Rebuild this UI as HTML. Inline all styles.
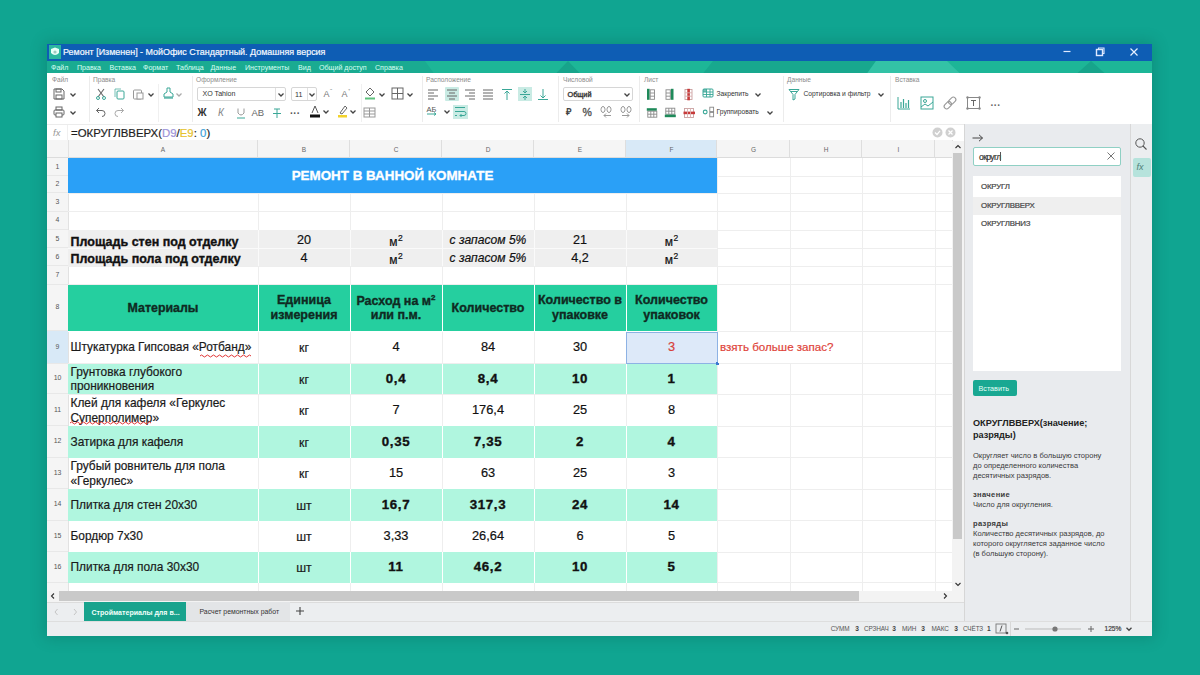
<!DOCTYPE html><html><head><meta charset="utf-8"><style>
*{box-sizing:border-box;margin:0;padding:0}
html,body{width:1200px;height:675px;overflow:hidden}
body{position:relative;background:#10a591;font-family:"Liberation Sans",sans-serif;color:#222}
div,span,svg{position:absolute}
.t{white-space:nowrap;line-height:1}
.k{-webkit-text-stroke:0.2px currentColor}
.kb{-webkit-text-stroke:0.35px currentColor}
</style></head><body>
<div style="left:47px;top:44px;width:1105px;height:592px;background:#fff;box-shadow:0 0 14px 2px rgba(0,60,50,0.22);"></div>
<div style="left:47px;top:44px;width:1105px;height:16.5px;background:#0e5db4;"></div>
<span class="t k" style="left:63px;top:48.4px;font-size:8.95px;color:#f4f8ff;font-weight:400;">Ремонт [Изменен] - МойОфис Стандартный. Домашняя версия</span>
<svg style="left:49px;top:45px" width="12" height="14" viewBox="0 0 12 14"><rect x="0" y="0" width="12" height="14" fill="#2bb7a0"/><path d="M2 4 L6 2.5 L10 4 L10 8 Q6 12 2 8 Z" fill="#e8fff8"/><circle cx="6" cy="7" r="1.6" fill="#9fc9c0"/></svg>
<svg style="left:1060px;top:44px" width="90" height="16"><line x1="3.5" y1="7.5" x2="10.5" y2="7.5" stroke="#dfeaff" stroke-width="1.2"/><rect x="36.5" y="5.5" width="6" height="6" fill="none" stroke="#dfeaff" stroke-width="1.4"/><path d="M38.5 5 V4 H44 V9.5 H43" fill="none" stroke="#dfeaff" stroke-width="1.1"/><path d="M70.5 4.5 L77.5 11.5 M77.5 4.5 L70.5 11.5" stroke="#e6f0ff" stroke-width="1.2"/></svg>
<div style="left:47px;top:60.5px;width:1105px;height:12.5px;background:#1db697;"></div>
<svg style="left:47px;top:60.5px" width="1105" height="12.5" viewBox="0 0 1105 13" preserveAspectRatio="none"><polygon points="0,0 378,0 387,13 0,13" fill="#1aab91"/><polygon points="509,13 521,0 533,13" fill="#17a48b"/><polygon points="656,13 666,0 829,0 820,13" fill="#18a88e"/><polygon points="820,13 829,0 900,0 913,13" fill="#33c2a6"/><polygon points="1030,13 1044,0 1058,13" fill="#17a48b"/></svg>
<span class="t " style="left:51px;top:65.2px;font-size:7.1px;color:#d9fff3;font-weight:400;">Файл</span>
<span class="t " style="left:77px;top:65.2px;font-size:7.1px;color:#d9fff3;font-weight:400;">Правка</span>
<span class="t " style="left:109.5px;top:65.2px;font-size:7.1px;color:#d9fff3;font-weight:400;">Вставка</span>
<span class="t " style="left:143px;top:65.2px;font-size:7.1px;color:#d9fff3;font-weight:400;">Формат</span>
<span class="t " style="left:176px;top:65.2px;font-size:7.1px;color:#d9fff3;font-weight:400;">Таблица</span>
<span class="t " style="left:210.5px;top:65.2px;font-size:7.1px;color:#d9fff3;font-weight:400;">Данные</span>
<span class="t " style="left:245px;top:65.2px;font-size:7.1px;color:#d9fff3;font-weight:400;">Инструменты</span>
<span class="t " style="left:298px;top:65.2px;font-size:7.1px;color:#d9fff3;font-weight:400;">Вид</span>
<span class="t " style="left:319px;top:65.2px;font-size:7.1px;color:#d9fff3;font-weight:400;">Общий доступ</span>
<span class="t " style="left:375px;top:65.2px;font-size:7.1px;color:#d9fff3;font-weight:400;">Справка</span>
<div style="left:47px;top:73px;width:1105px;height:51px;background:#fff;"></div>
<div style="left:47px;top:124px;width:1105px;height:1px;background:#ececec;"></div>
<span class="t " style="left:52px;top:76.5px;font-size:6.6px;color:#8c8c8c;font-weight:400;">Файл</span>
<span class="t " style="left:93px;top:76.5px;font-size:6.6px;color:#8c8c8c;font-weight:400;">Правка</span>
<span class="t " style="left:196px;top:76.5px;font-size:6.6px;color:#8c8c8c;font-weight:400;">Оформление</span>
<span class="t " style="left:426px;top:76.5px;font-size:6.6px;color:#8c8c8c;font-weight:400;">Расположение</span>
<span class="t " style="left:563px;top:76.5px;font-size:6.6px;color:#8c8c8c;font-weight:400;">Числовой</span>
<span class="t " style="left:644px;top:76.5px;font-size:6.6px;color:#8c8c8c;font-weight:400;">Лист</span>
<span class="t " style="left:787px;top:76.5px;font-size:6.6px;color:#8c8c8c;font-weight:400;">Данные</span>
<span class="t " style="left:895px;top:76.5px;font-size:6.6px;color:#8c8c8c;font-weight:400;">Вставка</span>
<div style="left:89px;top:76px;width:1px;height:46px;background:#ececec;"></div>
<div style="left:191.5px;top:76px;width:1px;height:46px;background:#ececec;"></div>
<div style="left:421.5px;top:76px;width:1px;height:46px;background:#ececec;"></div>
<div style="left:558px;top:76px;width:1px;height:46px;background:#ececec;"></div>
<div style="left:639px;top:76px;width:1px;height:46px;background:#ececec;"></div>
<div style="left:782.5px;top:76px;width:1px;height:46px;background:#ececec;"></div>
<div style="left:890px;top:76px;width:1px;height:46px;background:#ececec;"></div>
<div style="left:158px;top:84px;width:1px;height:38px;background:#f0f0f0;"></div>
<div style="left:360.5px;top:84px;width:1px;height:38px;background:#f0f0f0;"></div>
<span class="t " style="left:53px;top:128px;font-size:9.5px;color:#999;font-weight:400;font-style:italic;">fx</span>
<div style="left:67px;top:125px;width:1px;height:14.5px;background:#f0f0f0;"></div>
<span class="t k" style="left:71px;top:128.3px;font-size:11.4px;color:#1e1e1e">=ОКРУГЛВВЕРХ(<span style="position:static;color:#9d93d8">D9</span>/<span style="position:static;color:#e6c22e">E9</span>: <span style="position:static;color:#3d9fd8">0</span>)</span>
<svg style="left:931px;top:126px" width="26" height="13"><circle cx="6.5" cy="6.5" r="5" fill="#d0d0d0"/><path d="M4 6.5 L6 8.5 L9 4.8" stroke="#fff" stroke-width="1.2" fill="none"/><circle cx="19.5" cy="6.5" r="5" fill="#d0d0d0"/><path d="M17.5 4.5 L21.5 8.5 M21.5 4.5 L17.5 8.5" stroke="#fff" stroke-width="1.2"/></svg>
<div style="left:47px;top:139.5px;width:905px;height:18.5px;background:#f5f5f5;"></div>
<div style="left:68px;top:139.5px;width:190px;height:18.5px;background:#f5f5f5;"></div>
<div style="left:257px;top:139.5px;width:1px;height:18.5px;background:#dedede;"></div>
<span class="t " style="left:13.0px;width:300px;text-align:center;top:146.5px;font-size:6.5px;color:#666;font-weight:400;">A</span>
<div style="left:258px;top:139.5px;width:92px;height:18.5px;background:#f5f5f5;"></div>
<div style="left:349px;top:139.5px;width:1px;height:18.5px;background:#dedede;"></div>
<span class="t " style="left:154.0px;width:300px;text-align:center;top:146.5px;font-size:6.5px;color:#666;font-weight:400;">B</span>
<div style="left:350px;top:139.5px;width:92px;height:18.5px;background:#f5f5f5;"></div>
<div style="left:441px;top:139.5px;width:1px;height:18.5px;background:#dedede;"></div>
<span class="t " style="left:246.0px;width:300px;text-align:center;top:146.5px;font-size:6.5px;color:#666;font-weight:400;">C</span>
<div style="left:442px;top:139.5px;width:92px;height:18.5px;background:#f5f5f5;"></div>
<div style="left:533px;top:139.5px;width:1px;height:18.5px;background:#dedede;"></div>
<span class="t " style="left:338.0px;width:300px;text-align:center;top:146.5px;font-size:6.5px;color:#666;font-weight:400;">D</span>
<div style="left:534px;top:139.5px;width:92px;height:18.5px;background:#f5f5f5;"></div>
<div style="left:625px;top:139.5px;width:1px;height:18.5px;background:#dedede;"></div>
<span class="t " style="left:430.0px;width:300px;text-align:center;top:146.5px;font-size:6.5px;color:#666;font-weight:400;">E</span>
<div style="left:626px;top:139.5px;width:91px;height:18.5px;background:#d8e9f7;"></div>
<div style="left:716px;top:139.5px;width:1px;height:18.5px;background:#dedede;"></div>
<span class="t " style="left:521.5px;width:300px;text-align:center;top:146.5px;font-size:6.5px;color:#666;font-weight:400;">F</span>
<div style="left:717px;top:139.5px;width:73px;height:18.5px;background:#f5f5f5;"></div>
<div style="left:789px;top:139.5px;width:1px;height:18.5px;background:#dedede;"></div>
<span class="t " style="left:603.5px;width:300px;text-align:center;top:146.5px;font-size:6.5px;color:#666;font-weight:400;">G</span>
<div style="left:790px;top:139.5px;width:72px;height:18.5px;background:#f5f5f5;"></div>
<div style="left:861px;top:139.5px;width:1px;height:18.5px;background:#dedede;"></div>
<span class="t " style="left:676.0px;width:300px;text-align:center;top:146.5px;font-size:6.5px;color:#666;font-weight:400;">H</span>
<div style="left:862px;top:139.5px;width:73px;height:18.5px;background:#f5f5f5;"></div>
<div style="left:934px;top:139.5px;width:1px;height:18.5px;background:#dedede;"></div>
<span class="t " style="left:748.5px;width:300px;text-align:center;top:146.5px;font-size:6.5px;color:#666;font-weight:400;">I</span>
<div style="left:935px;top:139.5px;width:17px;height:18.5px;background:#f5f5f5;"></div>
<div style="left:952px;top:139.5px;width:1px;height:18.5px;background:#dedede;"></div>
<span class="t " style="left:821.5px;width:300px;text-align:center;top:146.5px;font-size:6.5px;color:#666;font-weight:400;">J</span>
<div style="left:47px;top:157px;width:905px;height:1px;background:#dcdcdc;"></div>
<div style="left:47px;top:158px;width:21px;height:18px;background:#f5f5f5;"></div>
<div style="left:47px;top:175px;width:21px;height:1px;background:#e8e8e8;"></div>
<span class="t " style="left:-92.5px;width:300px;text-align:center;top:163.6px;font-size:6.9px;color:#555;font-weight:400;">1</span>
<div style="left:47px;top:176px;width:21px;height:17px;background:#f5f5f5;"></div>
<div style="left:47px;top:192px;width:21px;height:1px;background:#e8e8e8;"></div>
<span class="t " style="left:-92.5px;width:300px;text-align:center;top:181.1px;font-size:6.9px;color:#555;font-weight:400;">2</span>
<div style="left:47px;top:193px;width:21px;height:18.5px;background:#f5f5f5;"></div>
<div style="left:47px;top:210.5px;width:21px;height:1px;background:#e8e8e8;"></div>
<span class="t " style="left:-92.5px;width:300px;text-align:center;top:198.85px;font-size:6.9px;color:#555;font-weight:400;">3</span>
<div style="left:47px;top:211.5px;width:21px;height:18.5px;background:#f5f5f5;"></div>
<div style="left:47px;top:229px;width:21px;height:1px;background:#e8e8e8;"></div>
<span class="t " style="left:-92.5px;width:300px;text-align:center;top:217.35px;font-size:6.9px;color:#555;font-weight:400;">4</span>
<div style="left:47px;top:230px;width:21px;height:18px;background:#f5f5f5;"></div>
<div style="left:47px;top:247px;width:21px;height:1px;background:#e8e8e8;"></div>
<span class="t " style="left:-92.5px;width:300px;text-align:center;top:235.6px;font-size:6.9px;color:#555;font-weight:400;">5</span>
<div style="left:47px;top:248px;width:21px;height:18px;background:#f5f5f5;"></div>
<div style="left:47px;top:265px;width:21px;height:1px;background:#e8e8e8;"></div>
<span class="t " style="left:-92.5px;width:300px;text-align:center;top:253.6px;font-size:6.9px;color:#555;font-weight:400;">6</span>
<div style="left:47px;top:266px;width:21px;height:18.5px;background:#f5f5f5;"></div>
<div style="left:47px;top:283.5px;width:21px;height:1px;background:#e8e8e8;"></div>
<span class="t " style="left:-92.5px;width:300px;text-align:center;top:271.85px;font-size:6.9px;color:#555;font-weight:400;">7</span>
<div style="left:47px;top:284.5px;width:21px;height:46.5px;background:#f5f5f5;"></div>
<div style="left:47px;top:330px;width:21px;height:1px;background:#e8e8e8;"></div>
<span class="t " style="left:-92.5px;width:300px;text-align:center;top:304.35px;font-size:6.9px;color:#555;font-weight:400;">8</span>
<div style="left:47px;top:331px;width:21px;height:32.5px;background:#d8e9f7;"></div>
<div style="left:47px;top:362.5px;width:21px;height:1px;background:#e8e8e8;"></div>
<span class="t " style="left:-92.5px;width:300px;text-align:center;top:343.85px;font-size:6.9px;color:#555;font-weight:400;">9</span>
<div style="left:47px;top:363.5px;width:21px;height:30.5px;background:#f5f5f5;"></div>
<div style="left:47px;top:393px;width:21px;height:1px;background:#e8e8e8;"></div>
<span class="t " style="left:-92.5px;width:300px;text-align:center;top:375.35px;font-size:6.9px;color:#555;font-weight:400;">10</span>
<div style="left:47px;top:394px;width:21px;height:32px;background:#f5f5f5;"></div>
<div style="left:47px;top:425px;width:21px;height:1px;background:#e8e8e8;"></div>
<span class="t " style="left:-92.5px;width:300px;text-align:center;top:406.6px;font-size:6.9px;color:#555;font-weight:400;">11</span>
<div style="left:47px;top:426px;width:21px;height:31.5px;background:#f5f5f5;"></div>
<div style="left:47px;top:456.5px;width:21px;height:1px;background:#e8e8e8;"></div>
<span class="t " style="left:-92.5px;width:300px;text-align:center;top:438.35px;font-size:6.9px;color:#555;font-weight:400;">12</span>
<div style="left:47px;top:457.5px;width:21px;height:31.5px;background:#f5f5f5;"></div>
<div style="left:47px;top:488px;width:21px;height:1px;background:#e8e8e8;"></div>
<span class="t " style="left:-92.5px;width:300px;text-align:center;top:469.85px;font-size:6.9px;color:#555;font-weight:400;">13</span>
<div style="left:47px;top:489px;width:21px;height:31.5px;background:#f5f5f5;"></div>
<div style="left:47px;top:519.5px;width:21px;height:1px;background:#e8e8e8;"></div>
<span class="t " style="left:-92.5px;width:300px;text-align:center;top:501.35px;font-size:6.9px;color:#555;font-weight:400;">14</span>
<div style="left:47px;top:520.5px;width:21px;height:31.5px;background:#f5f5f5;"></div>
<div style="left:47px;top:551px;width:21px;height:1px;background:#e8e8e8;"></div>
<span class="t " style="left:-92.5px;width:300px;text-align:center;top:532.85px;font-size:6.9px;color:#555;font-weight:400;">15</span>
<div style="left:47px;top:552px;width:21px;height:30.5px;background:#f5f5f5;"></div>
<div style="left:47px;top:581.5px;width:21px;height:1px;background:#e8e8e8;"></div>
<span class="t " style="left:-92.5px;width:300px;text-align:center;top:563.85px;font-size:6.9px;color:#555;font-weight:400;">16</span>
<div style="left:47px;top:582.5px;width:21px;height:8.0px;background:#f5f5f5;"></div>
<span class="t " style="left:-92.5px;width:300px;text-align:center;top:594.85px;font-size:6.9px;color:#555;font-weight:400;">17</span>
<div style="left:67.5px;top:139.5px;width:1px;height:451.0px;background:#e2e2e2;"></div>
<div style="left:257.5px;top:158px;width:1px;height:432.5px;background:#eeeeee;"></div>
<div style="left:349.5px;top:158px;width:1px;height:432.5px;background:#eeeeee;"></div>
<div style="left:441.5px;top:158px;width:1px;height:432.5px;background:#eeeeee;"></div>
<div style="left:533.5px;top:158px;width:1px;height:432.5px;background:#eeeeee;"></div>
<div style="left:625.5px;top:158px;width:1px;height:432.5px;background:#eeeeee;"></div>
<div style="left:716.5px;top:158px;width:1px;height:432.5px;background:#eeeeee;"></div>
<div style="left:789.5px;top:158px;width:1px;height:432.5px;background:#eeeeee;"></div>
<div style="left:861.5px;top:158px;width:1px;height:432.5px;background:#eeeeee;"></div>
<div style="left:934.5px;top:158px;width:1px;height:432.5px;background:#eeeeee;"></div>
<div style="left:68px;top:175.5px;width:884px;height:1px;background:#eeeeee;"></div>
<div style="left:68px;top:192.5px;width:884px;height:1px;background:#eeeeee;"></div>
<div style="left:68px;top:211.0px;width:884px;height:1px;background:#eeeeee;"></div>
<div style="left:68px;top:229.5px;width:884px;height:1px;background:#eeeeee;"></div>
<div style="left:68px;top:247.5px;width:884px;height:1px;background:#eeeeee;"></div>
<div style="left:68px;top:265.5px;width:884px;height:1px;background:#eeeeee;"></div>
<div style="left:68px;top:284.0px;width:884px;height:1px;background:#eeeeee;"></div>
<div style="left:68px;top:330.5px;width:884px;height:1px;background:#eeeeee;"></div>
<div style="left:68px;top:363.0px;width:884px;height:1px;background:#eeeeee;"></div>
<div style="left:68px;top:393.5px;width:884px;height:1px;background:#eeeeee;"></div>
<div style="left:68px;top:425.5px;width:884px;height:1px;background:#eeeeee;"></div>
<div style="left:68px;top:457.0px;width:884px;height:1px;background:#eeeeee;"></div>
<div style="left:68px;top:488.5px;width:884px;height:1px;background:#eeeeee;"></div>
<div style="left:68px;top:520.0px;width:884px;height:1px;background:#eeeeee;"></div>
<div style="left:68px;top:551.5px;width:884px;height:1px;background:#eeeeee;"></div>
<div style="left:68px;top:582.0px;width:884px;height:1px;background:#eeeeee;"></div>
<div style="left:68px;top:158px;width:649px;height:35px;background:#2aa0f7;"></div>
<span class="t kb" style="left:242.5px;width:300px;text-align:center;top:169px;font-size:13.4px;color:#fff;font-weight:700;">РЕМОНТ В ВАННОЙ КОМНАТЕ</span>
<div style="left:68px;top:230px;width:649px;height:18px;background:#efefef;"></div>
<div style="left:257.5px;top:230px;width:1px;height:18px;background:#fafafa;"></div>
<div style="left:349.5px;top:230px;width:1px;height:18px;background:#fafafa;"></div>
<div style="left:441.5px;top:230px;width:1px;height:18px;background:#fafafa;"></div>
<div style="left:533.5px;top:230px;width:1px;height:18px;background:#fafafa;"></div>
<div style="left:625.5px;top:230px;width:1px;height:18px;background:#fafafa;"></div>
<div style="left:68px;top:248px;width:649px;height:18px;background:#efefef;"></div>
<div style="left:257.5px;top:248px;width:1px;height:18px;background:#fafafa;"></div>
<div style="left:349.5px;top:248px;width:1px;height:18px;background:#fafafa;"></div>
<div style="left:441.5px;top:248px;width:1px;height:18px;background:#fafafa;"></div>
<div style="left:533.5px;top:248px;width:1px;height:18px;background:#fafafa;"></div>
<div style="left:625.5px;top:248px;width:1px;height:18px;background:#fafafa;"></div>
<div style="left:68px;top:247.5px;width:649px;height:1px;background:#fafafa;"></div>
<div style="left:68px;top:284.5px;width:649px;height:46.5px;background:#25cf9f;"></div>
<div style="left:257.5px;top:284.5px;width:1px;height:46.5px;background:#fff;"></div>
<div style="left:349.5px;top:284.5px;width:1px;height:46.5px;background:#fff;"></div>
<div style="left:441.5px;top:284.5px;width:1px;height:46.5px;background:#fff;"></div>
<div style="left:533.5px;top:284.5px;width:1px;height:46.5px;background:#fff;"></div>
<div style="left:625.5px;top:284.5px;width:1px;height:46.5px;background:#fff;"></div>
<div style="left:68px;top:363.5px;width:649px;height:30.5px;background:#b0f6df;"></div>
<div style="left:257.5px;top:363.5px;width:1px;height:30.5px;background:#fff;"></div>
<div style="left:349.5px;top:363.5px;width:1px;height:30.5px;background:#fff;"></div>
<div style="left:441.5px;top:363.5px;width:1px;height:30.5px;background:#fff;"></div>
<div style="left:533.5px;top:363.5px;width:1px;height:30.5px;background:#fff;"></div>
<div style="left:625.5px;top:363.5px;width:1px;height:30.5px;background:#fff;"></div>
<div style="left:68px;top:426px;width:649px;height:31.5px;background:#b0f6df;"></div>
<div style="left:257.5px;top:426px;width:1px;height:31.5px;background:#fff;"></div>
<div style="left:349.5px;top:426px;width:1px;height:31.5px;background:#fff;"></div>
<div style="left:441.5px;top:426px;width:1px;height:31.5px;background:#fff;"></div>
<div style="left:533.5px;top:426px;width:1px;height:31.5px;background:#fff;"></div>
<div style="left:625.5px;top:426px;width:1px;height:31.5px;background:#fff;"></div>
<div style="left:68px;top:489px;width:649px;height:31.5px;background:#b0f6df;"></div>
<div style="left:257.5px;top:489px;width:1px;height:31.5px;background:#fff;"></div>
<div style="left:349.5px;top:489px;width:1px;height:31.5px;background:#fff;"></div>
<div style="left:441.5px;top:489px;width:1px;height:31.5px;background:#fff;"></div>
<div style="left:533.5px;top:489px;width:1px;height:31.5px;background:#fff;"></div>
<div style="left:625.5px;top:489px;width:1px;height:31.5px;background:#fff;"></div>
<div style="left:68px;top:552px;width:649px;height:30.5px;background:#b0f6df;"></div>
<div style="left:257.5px;top:552px;width:1px;height:30.5px;background:#fff;"></div>
<div style="left:349.5px;top:552px;width:1px;height:30.5px;background:#fff;"></div>
<div style="left:441.5px;top:552px;width:1px;height:30.5px;background:#fff;"></div>
<div style="left:533.5px;top:552px;width:1px;height:30.5px;background:#fff;"></div>
<div style="left:625.5px;top:552px;width:1px;height:30.5px;background:#fff;"></div>
<div style="left:68px;top:331px;width:649px;height:0.8px;background:#fff;"></div>
<div style="left:625.5px;top:331.5px;width:92px;height:32px;background:#dde9f9;border:1px solid #8db2e4;"></div>
<div style="left:715.5px;top:361.5px;width:3px;height:3px;background:#3a78d0;"></div>
<span class="t kb" style="left:70.5px;top:235.5px;font-size:12.5px;color:#111;font-weight:700;">Площадь стен под отделку</span>
<span class="t kb" style="left:70.5px;top:252.8px;font-size:12.5px;color:#111;font-weight:700;">Площадь пола под отделку</span>
<span class="t k" style="left:154.0px;width:300px;text-align:center;top:233.76999999999998px;font-size:12.6px;color:#111;font-weight:400;">20</span>
<span class="t k" style="left:246.0px;width:300px;text-align:center;top:234.1px;font-size:12px;color:#111;font-weight:400;">м<span style='position:static;font-size:8.5px;vertical-align:5px;margin-left:0.5px'>2</span></span>
<span class="t k" style="left:338.0px;width:300px;text-align:center;top:234.045px;font-size:12.1px;color:#111;font-weight:400;font-style:italic;">с запасом 5%</span>
<span class="t k" style="left:430.0px;width:300px;text-align:center;top:233.76999999999998px;font-size:12.6px;color:#111;font-weight:400;">21</span>
<span class="t k" style="left:521.5px;width:300px;text-align:center;top:234.1px;font-size:12px;color:#111;font-weight:400;">м<span style='position:static;font-size:8.5px;vertical-align:5px;margin-left:0.5px'>2</span></span>
<span class="t k" style="left:154.0px;width:300px;text-align:center;top:251.76999999999998px;font-size:12.6px;color:#111;font-weight:400;">4</span>
<span class="t k" style="left:246.0px;width:300px;text-align:center;top:252.1px;font-size:12px;color:#111;font-weight:400;">м<span style='position:static;font-size:8.5px;vertical-align:5px;margin-left:0.5px'>2</span></span>
<span class="t k" style="left:338.0px;width:300px;text-align:center;top:252.045px;font-size:12.1px;color:#111;font-weight:400;font-style:italic;">с запасом 5%</span>
<span class="t k" style="left:430.0px;width:300px;text-align:center;top:251.76999999999998px;font-size:12.6px;color:#111;font-weight:400;">4,2</span>
<span class="t k" style="left:521.5px;width:300px;text-align:center;top:252.1px;font-size:12px;color:#111;font-weight:400;">м<span style='position:static;font-size:8.5px;vertical-align:5px;margin-left:0.5px'>2</span></span>
<span class="t kb" style="left:13px;width:300px;text-align:center;top:301.55px;font-size:12.4px;color:#0f2a22;font-weight:700;">Материалы</span>
<span class="t kb" style="left:154px;width:300px;text-align:center;top:294.05px;font-size:12.5px;color:#0f2a22;font-weight:700;">Единица</span>
<span class="t kb" style="left:154px;width:300px;text-align:center;top:308.55px;font-size:12.5px;color:#0f2a22;font-weight:700;">измерения</span>
<span class="t kb" style="left:246px;width:300px;text-align:center;top:294.05px;font-size:12.5px;color:#0f2a22;font-weight:700;">Расход на м<sup style='position:static;font-size:8px;vertical-align:5px'>2</sup></span>
<span class="t kb" style="left:246px;width:300px;text-align:center;top:308.55px;font-size:12.5px;color:#0f2a22;font-weight:700;">или п.м.</span>
<span class="t kb" style="left:338px;width:300px;text-align:center;top:301.55px;font-size:12.5px;color:#0f2a22;font-weight:700;">Количество</span>
<span class="t kb" style="left:430px;width:300px;text-align:center;top:294.05px;font-size:12.5px;color:#0f2a22;font-weight:700;">Количество в</span>
<span class="t kb" style="left:430px;width:300px;text-align:center;top:308.55px;font-size:12.5px;color:#0f2a22;font-weight:700;">упаковке</span>
<span class="t kb" style="left:521.5px;width:300px;text-align:center;top:294.05px;font-size:12.5px;color:#0f2a22;font-weight:700;">Количество</span>
<span class="t kb" style="left:521.5px;width:300px;text-align:center;top:308.55px;font-size:12.5px;color:#0f2a22;font-weight:700;">упаковок</span>
<span class="t k" style="left:70.5px;top:342.35px;font-size:11.9px;color:#1a1a1a;font-weight:400;">Штукатурка Гипсовая «Ротбанд»</span>
<span class="t k" style="left:154.0px;width:300px;text-align:center;top:342.185px;font-size:12.3px;color:#1a1a1a;font-weight:400;">кг</span>
<span class="t k" style="left:246.0px;width:300px;text-align:center;top:340.90999999999997px;font-size:12.8px;color:#111;font-weight:400;">4</span>
<span class="t k" style="left:338.0px;width:300px;text-align:center;top:340.90999999999997px;font-size:12.8px;color:#111;font-weight:400;">84</span>
<span class="t k" style="left:430.0px;width:300px;text-align:center;top:340.90999999999997px;font-size:12.8px;color:#111;font-weight:400;">30</span>
<span class="t k" style="left:521.5px;width:300px;text-align:center;top:340.90999999999997px;font-size:12.8px;color:#d8413a;font-weight:400;">3</span>
<span class="t k" style="left:70.5px;top:366.85px;font-size:11.9px;color:#1a1a1a;font-weight:400;">Грунтовка глубокого</span>
<span class="t k" style="left:70.5px;top:381.25px;font-size:11.9px;color:#1a1a1a;font-weight:400;">проникновения</span>
<span class="t k" style="left:154.0px;width:300px;text-align:center;top:373.685px;font-size:12.3px;color:#1a1a1a;font-weight:400;">кг</span>
<span class="t kb" style="left:246.0px;width:300px;text-align:center;top:371.835px;font-size:13.3px;color:#111;font-weight:700;letter-spacing:0.6px;">0,4</span>
<span class="t kb" style="left:338.0px;width:300px;text-align:center;top:371.835px;font-size:13.3px;color:#111;font-weight:700;letter-spacing:0.6px;">8,4</span>
<span class="t kb" style="left:430.0px;width:300px;text-align:center;top:371.835px;font-size:13.3px;color:#111;font-weight:700;letter-spacing:0.6px;">10</span>
<span class="t kb" style="left:521.5px;width:300px;text-align:center;top:371.835px;font-size:13.3px;color:#111;font-weight:700;letter-spacing:0.6px;">1</span>
<span class="t k" style="left:70.5px;top:398.1px;font-size:11.9px;color:#1a1a1a;font-weight:400;">Клей для кафеля «Геркулес</span>
<span class="t k" style="left:70.5px;top:412.5px;font-size:11.9px;color:#1a1a1a;font-weight:400;">Суперполимер»</span>
<span class="t k" style="left:154.0px;width:300px;text-align:center;top:404.935px;font-size:12.3px;color:#1a1a1a;font-weight:400;">кг</span>
<span class="t k" style="left:246.0px;width:300px;text-align:center;top:403.65999999999997px;font-size:12.8px;color:#111;font-weight:400;">7</span>
<span class="t k" style="left:338.0px;width:300px;text-align:center;top:403.65999999999997px;font-size:12.8px;color:#111;font-weight:400;">176,4</span>
<span class="t k" style="left:430.0px;width:300px;text-align:center;top:403.65999999999997px;font-size:12.8px;color:#111;font-weight:400;">25</span>
<span class="t k" style="left:521.5px;width:300px;text-align:center;top:403.65999999999997px;font-size:12.8px;color:#111;font-weight:400;">8</span>
<span class="t k" style="left:70.5px;top:436.85px;font-size:11.9px;color:#1a1a1a;font-weight:400;">Затирка для кафеля</span>
<span class="t k" style="left:154.0px;width:300px;text-align:center;top:436.685px;font-size:12.3px;color:#1a1a1a;font-weight:400;">кг</span>
<span class="t kb" style="left:246.0px;width:300px;text-align:center;top:434.835px;font-size:13.3px;color:#111;font-weight:700;letter-spacing:0.6px;">0,35</span>
<span class="t kb" style="left:338.0px;width:300px;text-align:center;top:434.835px;font-size:13.3px;color:#111;font-weight:700;letter-spacing:0.6px;">7,35</span>
<span class="t kb" style="left:430.0px;width:300px;text-align:center;top:434.835px;font-size:13.3px;color:#111;font-weight:700;letter-spacing:0.6px;">2</span>
<span class="t kb" style="left:521.5px;width:300px;text-align:center;top:434.835px;font-size:13.3px;color:#111;font-weight:700;letter-spacing:0.6px;">4</span>
<span class="t k" style="left:70.5px;top:461.35px;font-size:11.9px;color:#1a1a1a;font-weight:400;">Грубый ровнитель для пола</span>
<span class="t k" style="left:70.5px;top:475.75px;font-size:11.9px;color:#1a1a1a;font-weight:400;">«Геркулес»</span>
<span class="t k" style="left:154.0px;width:300px;text-align:center;top:468.185px;font-size:12.3px;color:#1a1a1a;font-weight:400;">кг</span>
<span class="t k" style="left:246.0px;width:300px;text-align:center;top:466.90999999999997px;font-size:12.8px;color:#111;font-weight:400;">15</span>
<span class="t k" style="left:338.0px;width:300px;text-align:center;top:466.90999999999997px;font-size:12.8px;color:#111;font-weight:400;">63</span>
<span class="t k" style="left:430.0px;width:300px;text-align:center;top:466.90999999999997px;font-size:12.8px;color:#111;font-weight:400;">25</span>
<span class="t k" style="left:521.5px;width:300px;text-align:center;top:466.90999999999997px;font-size:12.8px;color:#111;font-weight:400;">3</span>
<span class="t k" style="left:70.5px;top:499.85px;font-size:11.9px;color:#1a1a1a;font-weight:400;">Плитка для стен 20х30</span>
<span class="t k" style="left:154.0px;width:300px;text-align:center;top:499.685px;font-size:12.3px;color:#1a1a1a;font-weight:400;">шт</span>
<span class="t kb" style="left:246.0px;width:300px;text-align:center;top:497.835px;font-size:13.3px;color:#111;font-weight:700;letter-spacing:0.6px;">16,7</span>
<span class="t kb" style="left:338.0px;width:300px;text-align:center;top:497.835px;font-size:13.3px;color:#111;font-weight:700;letter-spacing:0.6px;">317,3</span>
<span class="t kb" style="left:430.0px;width:300px;text-align:center;top:497.835px;font-size:13.3px;color:#111;font-weight:700;letter-spacing:0.6px;">24</span>
<span class="t kb" style="left:521.5px;width:300px;text-align:center;top:497.835px;font-size:13.3px;color:#111;font-weight:700;letter-spacing:0.6px;">14</span>
<span class="t k" style="left:70.5px;top:531.35px;font-size:11.9px;color:#1a1a1a;font-weight:400;">Бордюр 7х30</span>
<span class="t k" style="left:154.0px;width:300px;text-align:center;top:531.1850000000001px;font-size:12.3px;color:#1a1a1a;font-weight:400;">шт</span>
<span class="t k" style="left:246.0px;width:300px;text-align:center;top:529.9100000000001px;font-size:12.8px;color:#111;font-weight:400;">3,33</span>
<span class="t k" style="left:338.0px;width:300px;text-align:center;top:529.9100000000001px;font-size:12.8px;color:#111;font-weight:400;">26,64</span>
<span class="t k" style="left:430.0px;width:300px;text-align:center;top:529.9100000000001px;font-size:12.8px;color:#111;font-weight:400;">6</span>
<span class="t k" style="left:521.5px;width:300px;text-align:center;top:529.9100000000001px;font-size:12.8px;color:#111;font-weight:400;">5</span>
<span class="t k" style="left:70.5px;top:562.35px;font-size:11.9px;color:#1a1a1a;font-weight:400;">Плитка для пола 30х30</span>
<span class="t k" style="left:154.0px;width:300px;text-align:center;top:562.1850000000001px;font-size:12.3px;color:#1a1a1a;font-weight:400;">шт</span>
<span class="t kb" style="left:246.0px;width:300px;text-align:center;top:560.335px;font-size:13.3px;color:#111;font-weight:700;letter-spacing:0.6px;">11</span>
<span class="t kb" style="left:338.0px;width:300px;text-align:center;top:560.335px;font-size:13.3px;color:#111;font-weight:700;letter-spacing:0.6px;">46,2</span>
<span class="t kb" style="left:430.0px;width:300px;text-align:center;top:560.335px;font-size:13.3px;color:#111;font-weight:700;letter-spacing:0.6px;">10</span>
<span class="t kb" style="left:521.5px;width:300px;text-align:center;top:560.335px;font-size:13.3px;color:#111;font-weight:700;letter-spacing:0.6px;">5</span>
<div style="left:718px;top:331.5px;width:143.5px;height:31px;background:#fff;"></div>
<span class="t k" style="left:720px;top:341.05px;font-size:11.6px;color:#e0443a;font-weight:400;">взять больше запас?</span>
<svg style="left:200px;top:353.5px" width="52" height="4"><path d="M0 2 Q1.5 0 3 2 T6 2 T9 2 T12 2 T15 2 T18 2 T21 2 T24 2 T27 2 T30 2 T33 2 T36 2 T39 2 T42 2 T45 2 T48 2 T51 2" stroke="#e03535" stroke-width="1" fill="none"/></svg>
<svg style="left:70px;top:420.5px" width="84" height="4"><path d="M0 2 Q1.5 0 3 2 T6 2 T9 2 T12 2 T15 2 T18 2 T21 2 T24 2 T27 2 T30 2 T33 2 T36 2 T39 2 T42 2 T45 2 T48 2 T51 2 T54 2 T57 2 T60 2 T63 2 T66 2 T69 2 T72 2 T75 2 T78 2 T81 2" stroke="#e03535" stroke-width="1" fill="none"/></svg>
<div style="left:952px;top:141px;width:12px;height:450px;background:#f3f3f3;"></div>
<div style="left:953px;top:152.5px;width:9px;height:386px;background:#c9c9c9;"></div>
<svg style="left:953px;top:142px" width="10" height="10"><path d="M2.5 6 L5 3.5 L7.5 6" stroke="#333" stroke-width="1.1" fill="none"/></svg>
<svg style="left:953px;top:579px" width="10" height="10"><path d="M2.5 4 L5 6.5 L7.5 4" stroke="#333" stroke-width="1.1" fill="none"/></svg>
<div style="left:47px;top:590.5px;width:917px;height:11px;background:#f3f3f3;"></div>
<div style="left:59px;top:591px;width:800px;height:9.5px;background:#c9c9c9;"></div>
<svg style="left:48px;top:591px" width="10" height="10"><path d="M6 2.5 L3.5 5 L6 7.5" stroke="#333" stroke-width="1.1" fill="none"/></svg>
<svg style="left:940px;top:591px" width="10" height="10"><path d="M4 2.5 L6.5 5 L4 7.5" stroke="#333" stroke-width="1.1" fill="none"/></svg>
<div style="left:47px;top:601.5px;width:917px;height:20px;background:#eceef0;"></div>
<div style="left:47px;top:601.5px;width:917px;height:0.8px;background:#dcdcdc;"></div>
<svg style="left:50px;top:606px" width="30" height="12"><path d="M7.5 3 L5 6 L7.5 9" stroke="#c5c5c5" fill="none"/><path d="M24 3 L26.5 6 L24 9" stroke="#c5c5c5" fill="none"/></svg>
<div style="left:84px;top:602px;width:102px;height:18.5px;background:#18a38d;"></div>
<span class="t " style="left:91.5px;top:608.8px;font-size:7.05px;color:#f0fffa;font-weight:700;">Стройматериалы для в...</span>
<div style="left:186px;top:602px;width:103.5px;height:18.5px;background:#e3e5e7;"></div>
<span class="t " style="left:199.5px;top:608.8px;font-size:6.9px;color:#333;font-weight:400;">Расчет ремонтных работ</span>
<svg style="left:294px;top:605px" width="12" height="12"><path d="M6 2 V10 M2 6 H10" stroke="#444" stroke-width="1.1"/></svg>
<div style="left:964px;top:124px;width:188px;height:498px;background:#e9ebee;"></div>
<div style="left:963.5px;top:124px;width:1px;height:498px;background:#d6d6d6;"></div>
<div style="left:1129.5px;top:124px;width:1px;height:498px;background:#d8d8d8;"></div>
<div style="left:1130.5px;top:124px;width:21.5px;height:498px;background:#eceef0;"></div>
<svg style="left:971px;top:133px" width="14" height="10"><path d="M1.5 5 H11.5 M8 1.8 L11.5 5 L8 8.2" stroke="#444" stroke-width="1" fill="none"/></svg>
<div style="left:972.5px;top:147px;width:148px;height:18.5px;background:#fff;border:1px solid #8fd0c4;border-radius:2px;"></div>
<span class="t k" style="left:979px;top:152.8px;font-size:8.6px;color:#333;font-weight:400;letter-spacing:-0.65px">округл</span>
<div style="left:999.8px;top:152px;width:0.9px;height:8.8px;background:#555;"></div>
<svg style="left:1106px;top:151px" width="10" height="10"><path d="M1.5 1.5 L8.5 8.5 M8.5 1.5 L1.5 8.5" stroke="#777" stroke-width="1"/></svg>
<div style="left:972.5px;top:175.5px;width:148px;height:195px;background:#fff;"></div>
<div style="left:972.5px;top:196.5px;width:148px;height:18px;background:#efefef;"></div>
<span class="t k" style="left:981px;top:183.2px;font-size:7.9px;color:#444;font-weight:400;letter-spacing:-0.2px">ОКРУГЛ</span>
<span class="t k" style="left:981px;top:201.7px;font-size:7.9px;color:#444;font-weight:400;letter-spacing:-0.2px">ОКРУГЛВВЕРХ</span>
<span class="t k" style="left:981px;top:220.2px;font-size:7.9px;color:#444;font-weight:400;letter-spacing:-0.2px">ОКРУГЛВНИЗ</span>
<div style="left:973px;top:379.5px;width:43.5px;height:16px;background:#19a892;border-radius:2px;"></div>
<span class="t " style="left:978.5px;top:384.5px;font-size:7.2px;color:#e6fff8;font-weight:400;">Вставить</span>
<span class="t " style="left:973px;top:419px;font-size:9.15px;color:#222;font-weight:700;">ОКРУГЛВВЕРХ(значение;</span>
<span class="t " style="left:973px;top:430.7px;font-size:9.15px;color:#222;font-weight:700;">разряды)</span>
<span class="t " style="left:973px;top:451.5px;font-size:7.55px;color:#3a3a3a;font-weight:400;">Округляет число в большую сторону</span>
<span class="t " style="left:973px;top:461.5px;font-size:7.55px;color:#3a3a3a;font-weight:400;">до определенного количества</span>
<span class="t " style="left:973px;top:471.5px;font-size:7.55px;color:#3a3a3a;font-weight:400;">десятичных разрядов.</span>
<span class="t " style="left:973px;top:490.5px;font-size:7.55px;color:#3a3a3a;font-weight:700;letter-spacing:0.35px;">значение</span>
<span class="t " style="left:973px;top:500.5px;font-size:7.55px;color:#3a3a3a;font-weight:400;">Число для округления.</span>
<span class="t " style="left:973px;top:519.5px;font-size:7.55px;color:#3a3a3a;font-weight:700;letter-spacing:0.35px;">разряды</span>
<span class="t " style="left:973px;top:529.5px;font-size:7.55px;color:#3a3a3a;font-weight:400;">Количество десятичных разрядов, до</span>
<span class="t " style="left:973px;top:539.5px;font-size:7.55px;color:#3a3a3a;font-weight:400;">которого округляется заданное число</span>
<span class="t " style="left:973px;top:549.5px;font-size:7.55px;color:#3a3a3a;font-weight:400;">(в большую сторону).</span>
<svg style="left:1134px;top:137px" width="14" height="14"><circle cx="6" cy="6" r="4.2" stroke="#555" stroke-width="1" fill="none"/><path d="M9 9 L12.5 12.5" stroke="#555" stroke-width="1.1"/></svg>
<div style="left:1132.5px;top:158px;width:18px;height:18.5px;background:#b6e3dc;border-radius:2px;"></div>
<span class="t " style="left:1136.5px;top:163px;font-size:9px;color:#4f7f78;font-weight:400;font-style:italic;">fx</span>
<div style="left:47px;top:621px;width:1105px;height:15px;background:#eceef0;"></div>
<div style="left:47px;top:621px;width:1105px;height:0.8px;background:#dedede;"></div>
<span class="t " style="left:830.8px;top:626.2px;font-size:6.4px;color:#555;font-weight:400;width:19.0px;text-align:justify;text-align-last:justify;letter-spacing:-0.1px">СУММ</span>
<span class="t " style="left:855.2px;top:626.2px;font-size:6.6px;color:#444;font-weight:700;">3</span>
<span class="t " style="left:864px;top:626.2px;font-size:6.4px;color:#555;font-weight:400;width:24px;text-align:justify;text-align-last:justify;letter-spacing:-0.1px">СРЗНАЧ</span>
<span class="t " style="left:892.2px;top:626.2px;font-size:6.6px;color:#444;font-weight:700;">3</span>
<span class="t " style="left:902px;top:626.2px;font-size:6.4px;color:#555;font-weight:400;width:15px;text-align:justify;text-align-last:justify;letter-spacing:-0.1px">МИН</span>
<span class="t " style="left:921.2px;top:626.2px;font-size:6.6px;color:#444;font-weight:700;">3</span>
<span class="t " style="left:931.4px;top:626.2px;font-size:6.4px;color:#555;font-weight:400;width:17.600000000000023px;text-align:justify;text-align-last:justify;letter-spacing:-0.1px">МАКС</span>
<span class="t " style="left:954.2px;top:626.2px;font-size:6.6px;color:#444;font-weight:700;">3</span>
<span class="t " style="left:963px;top:626.2px;font-size:6.4px;color:#555;font-weight:400;width:18.5px;text-align:justify;text-align-last:justify;letter-spacing:-0.1px">СЧЁТЗ</span>
<span class="t " style="left:987px;top:626.2px;font-size:6.6px;color:#444;font-weight:700;">1</span>
<svg style="left:995px;top:623px" width="16" height="12"><rect x="1" y="1" width="10" height="9" fill="none" stroke="#777" stroke-width="0.9"/><path d="M7 2.5 L5 8.5" stroke="#555" stroke-width="1"/><circle cx="12" cy="10" r="1.3" fill="#555"/></svg>
<div style="left:1010px;top:622px;width:1px;height:14px;background:#d8d8d8;"></div>
<svg style="left:1012px;top:622px" width="130" height="14"><path d="M2 7 H7" stroke="#666"/><line x1="13" y1="7" x2="69" y2="7" stroke="#bbb" stroke-width="1"/><circle cx="43" cy="7" r="2.6" fill="#777"/><path d="M76 7 H82 M79 4 V10" stroke="#666"/><path d="M114.5 5.8 L117 8.3 L119.5 5.8" stroke="#444" stroke-width="1.3" fill="none"/></svg>
<span class="t k" style="left:1104.5px;top:626px;font-size:6.6px;color:#444;font-weight:400;">125%</span>
<svg style="left:53px;top:88px" width="12" height="12" viewBox="0 0 12 12"><path d="M1 1 H9 L11 3 V11 H1 Z" stroke="#666" fill="none"/><rect x="3" y="1" width="5" height="3" stroke="#666" fill="none"/><rect x="3" y="7" width="6" height="4" stroke="#666" fill="none"/></svg>
<svg style="left:69px;top:91.5px" width="8" height="6" viewBox="0 0 8 6"><path d="M1.5 1.5 L4 4 L6.5 1.5" stroke="#444" stroke-width="1.3" fill="none"/></svg>
<svg style="left:53px;top:106px" width="12" height="12" viewBox="0 0 12 12"><rect x="3" y="1" width="6" height="3" stroke="#666" fill="none"/><rect x="1" y="4" width="10" height="5" rx="1" stroke="#666" fill="none"/><rect x="3" y="7" width="6" height="4" stroke="#666" fill="#fff"/></svg>
<svg style="left:69px;top:109.5px" width="8" height="6" viewBox="0 0 8 6"><path d="M1.5 1.5 L4 4 L6.5 1.5" stroke="#444" stroke-width="1.3" fill="none"/></svg>
<svg style="left:95px;top:88px" width="12" height="12" viewBox="0 0 12 12"><path d="M3 1 L9 9 M9 1 L3 9" stroke="#666" stroke-width="1.1"/><circle cx="3" cy="10" r="1.5" stroke="#3aa797" fill="none"/><circle cx="9" cy="10" r="1.5" stroke="#3aa797" fill="none"/></svg>
<svg style="left:113px;top:88px" width="12" height="12" viewBox="0 0 12 12"><rect x="4" y="3" width="7" height="8" rx="1" stroke="#3aa797" fill="none"/><path d="M2 9 V1 H8" stroke="#3aa797" fill="none" opacity=".7"/></svg>
<svg style="left:132px;top:88px" width="12" height="12" viewBox="0 0 12 12"><rect x="1.5" y="2" width="8" height="9" rx="1" stroke="#999" fill="none"/><rect x="5" y="5" width="6" height="6" stroke="#999" fill="#fff"/></svg>
<svg style="left:147px;top:91.5px" width="8" height="6" viewBox="0 0 8 6"><path d="M1.5 1.5 L4 4 L6.5 1.5" stroke="#444" stroke-width="1.3" fill="none"/></svg>
<svg style="left:162px;top:87px" width="13" height="13" viewBox="0 0 13 13"><path d="M5 1 H8 V5 L11 7 V10 H2 V7 L5 5 Z" stroke="#3aa797" fill="none"/><rect x="2" y="10" width="9" height="2" fill="#3aa797" opacity=".6"/></svg>
<svg style="left:175px;top:91.5px" width="8" height="6" viewBox="0 0 8 6"><path d="M1.5 1.5 L4 4 L6.5 1.5" stroke="#aaa" stroke-width="1.3" fill="none"/></svg>
<svg style="left:95px;top:106px" width="12" height="12" viewBox="0 0 12 12"><path d="M4 2 L1.5 4.5 L4 7" stroke="#666" fill="none"/><path d="M1.5 4.5 H7 Q10 4.5 10 7.5 Q10 10.5 7 10.5" stroke="#666" fill="none"/></svg>
<svg style="left:113px;top:106px" width="12" height="12" viewBox="0 0 12 12"><path d="M8 2 L10.5 4.5 L8 7" stroke="#aaa" fill="none"/><path d="M10.5 4.5 H5 Q2 4.5 2 7.5 Q2 10.5 5 10.5" stroke="#aaa" fill="none"/></svg>
<div style="left:197px;top:87px;width:89px;height:14px;background:#fff;border:1px solid #d6d6d6;border-radius:2px;"></div>
<div style="left:275px;top:88px;width:1px;height:12px;background:#e0e0e0;"></div>
<span class="t " style="left:202.5px;top:90.5px;font-size:7.1px;color:#333;font-weight:400;">XO Tahion</span>
<svg style="left:276.5px;top:91.5px" width="8" height="6" viewBox="0 0 8 6"><path d="M1.5 1.5 L4 4 L6.5 1.5" stroke="#444" stroke-width="1.3" fill="none"/></svg>
<div style="left:290.5px;top:87px;width:26px;height:14px;background:#fff;border:1px solid #d6d6d6;border-radius:2px;"></div>
<div style="left:307px;top:88px;width:1px;height:12px;background:#e0e0e0;"></div>
<span class="t " style="left:295px;top:90.5px;font-size:7.2px;color:#333;font-weight:400;">11</span>
<svg style="left:308px;top:91.5px" width="8" height="6" viewBox="0 0 8 6"><path d="M1.5 1.5 L4 4 L6.5 1.5" stroke="#444" stroke-width="1.3" fill="none"/></svg>
<span class="t " style="left:323.5px;top:89.5px;font-size:9px;color:#777;font-weight:400;">A</span>
<span class="t " style="left:330px;top:88px;font-size:7px;color:#777;font-weight:400;">ˉ</span>
<span class="t " style="left:341.5px;top:89.5px;font-size:9px;color:#777;font-weight:400;">A</span>
<span class="t " style="left:348px;top:87.5px;font-size:7px;color:#777;font-weight:400;">⁺</span>
<svg style="left:364px;top:87px" width="13" height="13" viewBox="0 0 13 13"><path d="M6 1 L10 5 L6 9 L2 5 Z" stroke="#666" fill="none"/><rect x="1" y="10.5" width="10" height="2" fill="#5fc27e"/></svg>
<svg style="left:377.5px;top:91.5px" width="8" height="6" viewBox="0 0 8 6"><path d="M1.5 1.5 L4 4 L6.5 1.5" stroke="#444" stroke-width="1.3" fill="none"/></svg>
<svg style="left:391px;top:87px" width="13" height="13" viewBox="0 0 13 13"><rect x="1" y="1" width="11" height="11" stroke="#666" fill="none"/><path d="M6.5 1 V12 M1 6.5 H12" stroke="#666"/></svg>
<svg style="left:405.5px;top:91.5px" width="8" height="6" viewBox="0 0 8 6"><path d="M1.5 1.5 L4 4 L6.5 1.5" stroke="#444" stroke-width="1.3" fill="none"/></svg>
<span class="t " style="left:197.5px;top:108px;font-size:10px;color:#333;font-weight:700;">Ж</span>
<span class="t " style="left:218px;top:108px;font-size:10px;color:#888;font-weight:400;font-style:italic;">К</span>
<svg style="left:234.5px;top:106.5px" width="12" height="13" viewBox="0 0 12 13"><path d="M3 1.5 V6 Q6 10 9 6 V1.5" stroke="#999" fill="none"/><path d="M2 11 H10" stroke="#3aa797"/></svg>
<span class="t " style="left:251.5px;top:108px;font-size:9.5px;color:#666;font-weight:400;">AB</span>
<svg style="left:271px;top:106.5px" width="12" height="13" viewBox="0 0 12 13"><path d="M2 6.5 H10 M3 2 H9 M6 2 V11" stroke="#3aa797" fill="none"/></svg>
<span class="t " style="left:290px;top:108.5px;font-size:10px;color:#555;font-weight:700;">···</span>
<svg style="left:309px;top:104px" width="12" height="14" viewBox="0 0 12 14"><path d="M3 9 L6 2 L9 9" stroke="#555" fill="none"/><rect x="1" y="10.5" width="10" height="3" fill="#111"/></svg>
<svg style="left:322px;top:109px" width="8" height="6" viewBox="0 0 8 6"><path d="M1.5 1.5 L4 4 L6.5 1.5" stroke="#444" stroke-width="1.3" fill="none"/></svg>
<svg style="left:336px;top:104px" width="13" height="14" viewBox="0 0 13 14"><path d="M4 9 L9 2 L11 4 L6 10 Z" stroke="#666" fill="none"/><rect x="2" y="11" width="9" height="2.5" fill="#f2d22b"/></svg>
<svg style="left:349px;top:109px" width="8" height="6" viewBox="0 0 8 6"><path d="M1.5 1.5 L4 4 L6.5 1.5" stroke="#444" stroke-width="1.3" fill="none"/></svg>
<svg style="left:363px;top:107px" width="13" height="11" viewBox="0 0 13 11"><rect x="1" y="1" width="11" height="9" stroke="#999" fill="none"/><path d="M1 4 H12 M1 7 H12 M6.5 1 V10" stroke="#999"/></svg>
<svg style="left:427px;top:88px" width="12" height="13" viewBox="0 0 12 13"><path d="M1 2 H11 M1 5 H7 M1 8 H11 M1 11 H7" stroke="#666"/></svg>
<div style="left:444.5px;top:87px;width:14px;height:14px;background:#c9ebe4;border-radius:1px;"></div>
<svg style="left:445.5px;top:88px" width="12" height="13" viewBox="0 0 12 13"><path d="M1 2 H11 M3 5 H9 M1 8 H11 M3 11 H9" stroke="#666"/></svg>
<svg style="left:464px;top:88px" width="12" height="13" viewBox="0 0 12 13"><path d="M1 2 H11 M5 5 H11 M1 8 H11 M5 11 H11" stroke="#666"/></svg>
<svg style="left:482px;top:88px" width="12" height="13" viewBox="0 0 12 13"><path d="M1 2 H11 M1 5 H11 M1 8 H11 M1 11 H11" stroke="#666"/></svg>
<svg style="left:501px;top:88px" width="12" height="13" viewBox="0 0 12 13"><path d="M1 1.5 H11 M6 3 V12 M3.5 5.5 L6 3 L8.5 5.5" stroke="#3aa797" fill="none"/></svg>
<div style="left:518px;top:87px;width:14px;height:14px;background:#c9ebe4;"></div>
<svg style="left:519px;top:88px" width="12" height="13" viewBox="0 0 12 13"><path d="M1 6.5 H11 M6 1 V5 M6 8 V12 M4 3 L6 5 L8 3 M4 10 L6 8 L8 10" stroke="#3aa797" fill="none"/></svg>
<svg style="left:536.5px;top:88px" width="12" height="13" viewBox="0 0 12 13"><path d="M1 11.5 H11 M6 1 V10 M3.5 7.5 L6 10 L8.5 7.5" stroke="#3aa797" fill="none"/></svg>
<span class="t " style="left:426.5px;top:105.5px;font-size:7.5px;color:#555;font-weight:400;">AБ</span>
<svg style="left:426px;top:112px" width="12" height="4" viewBox="0 0 12 4"><path d="M1 2 H10 M8 0.5 L10 2 L8 3.5" stroke="#3aa797" fill="none"/></svg>
<svg style="left:442.5px;top:109px" width="8" height="6" viewBox="0 0 8 6"><path d="M1.5 1.5 L4 4 L6.5 1.5" stroke="#444" stroke-width="1.3" fill="none"/></svg>
<div style="left:453px;top:105px;width:15px;height:14px;background:#c9ebe4;"></div>
<svg style="left:454px;top:106px" width="13" height="12" viewBox="0 0 13 12"><path d="M1 1.5 H11 M1 5.5 H10 Q12 5.5 12 7.5 Q12 9.5 10 9.5 H6 M7.5 8 L6 9.5 L7.5 11 M1 9.5 H3" stroke="#3aa797" fill="none"/></svg>
<div style="left:562.5px;top:87px;width:70px;height:14px;background:#fff;border:1px solid #d6d6d6;border-radius:2px;"></div>
<span class="t kb" style="left:567.5px;top:90.5px;font-size:7.3px;color:#333;font-weight:400;">Общий</span>
<svg style="left:623px;top:91.5px" width="8" height="6" viewBox="0 0 8 6"><path d="M1.5 1.5 L4 4 L6.5 1.5" stroke="#444" stroke-width="1.3" fill="none"/></svg>
<span class="t " style="left:566px;top:107px;font-size:9.5px;color:#444;font-weight:700;">₽</span>
<span class="t kb" style="left:582.5px;top:106.5px;font-size:10.5px;color:#555;font-weight:400;">%</span>
<svg style="left:600px;top:105px" width="13" height="13" viewBox="0 0 13 13"><path d="M3 1.5 a2 3 0 1 0 0.01 0 M9 1.5 a2 3 0 1 0 0.01 0" stroke="#999" fill="none"/><path d="M11 10.5 H4 M6 8.5 L4 10.5 L6 12.5" stroke="#999" fill="none"/></svg>
<svg style="left:620px;top:105px" width="13" height="13" viewBox="0 0 13 13"><path d="M3 1.5 a2 3 0 1 0 0.01 0 M9 1.5 a2 3 0 1 0 0.01 0" stroke="#999" fill="none"/><path d="M2 10.5 H9 M7 8.5 L9 10.5 L7 12.5" stroke="#999" fill="none"/></svg>
<svg style="left:646px;top:88px" width="10" height="13" viewBox="0 0 10 13"><rect x="1" y="0.8" width="2.6" height="11" fill="#1f8a5a"/><rect x="4.2" y="1.8" width="4.3" height="9.5" stroke="#8a8a8a" stroke-width="0.9" fill="none"/><path d="M4.2 5 H8.5 M4.2 8.2 H8.5" stroke="#8a8a8a" stroke-width="0.9"/></svg>
<svg style="left:664.5px;top:88px" width="10" height="13" viewBox="0 0 10 13"><rect x="1" y="1.8" width="4.3" height="9.5" stroke="#8a8a8a" stroke-width="0.9" fill="none"/><path d="M1 5 H5.3 M1 8.2 H5.3" stroke="#8a8a8a" stroke-width="0.9"/><rect x="5.9" y="0.8" width="2.6" height="11" fill="#1f8a5a"/></svg>
<svg style="left:683.5px;top:88px" width="10" height="13" viewBox="0 0 10 13"><rect x="1" y="1.5" width="7" height="10" stroke="#c9a0a0" stroke-width="0.9" fill="none"/><rect x="3.3" y="0.8" width="2.6" height="11.5" fill="#c73a3a"/><path d="M1 4.8 H8 M1 8.2 H8" stroke="#d9b0b0" stroke-width="0.9"/></svg>
<svg style="left:645.5px;top:106.5px" width="13" height="12" viewBox="0 0 13 12"><rect x="0.8" y="1.2" width="10" height="2.6" fill="#1f8a5a"/><rect x="1.8" y="4.2" width="9" height="6" stroke="#8a8a8a" stroke-width="0.9" fill="none"/><path d="M1.8 7.2 H10.8 M4.8 4.2 V10.2 M7.8 4.2 V10.2" stroke="#8a8a8a" stroke-width="0.9"/></svg>
<svg style="left:663.5px;top:106.5px" width="13" height="12" viewBox="0 0 13 12"><rect x="1.8" y="1.2" width="9" height="6" stroke="#8a8a8a" stroke-width="0.9" fill="none"/><path d="M1.8 4.2 H10.8 M4.8 1.2 V7.2 M7.8 1.2 V7.2" stroke="#8a8a8a" stroke-width="0.9"/><rect x="0.8" y="7.6" width="11" height="2.6" fill="#1f8a5a"/></svg>
<svg style="left:682.5px;top:106.5px" width="13" height="12" viewBox="0 0 13 12"><rect x="1.5" y="1.5" width="9" height="9" stroke="#c9a0a0" stroke-width="0.9" fill="none"/><rect x="0.5" y="4.6" width="11.5" height="2.6" fill="#c73a3a"/><path d="M4.5 1.5 V10.5 M7.5 1.5 V10.5" stroke="#d9b0b0" stroke-width="0.9"/></svg>
<svg style="left:701.5px;top:88px" width="12" height="11" viewBox="0 0 12 11"><rect x="1" y="1" width="10" height="8" rx="1" stroke="#3aa797" stroke-width="1" fill="none"/><path d="M1 4 H11 M1 6.5 H11 M4.5 1 V9 M8 1 V9" stroke="#3aa797" stroke-width="0.9"/><rect x="1" y="1" width="3.5" height="3" fill="#3aa797" opacity=".7"/></svg>
<span class="t " style="left:716.5px;top:90.5px;font-size:6.7px;color:#333;font-weight:400;">Закрепить</span>
<svg style="left:753.5px;top:91.5px" width="8" height="6" viewBox="0 0 8 6"><path d="M1.5 1.5 L4 4 L6.5 1.5" stroke="#444" stroke-width="1.3" fill="none"/></svg>
<svg style="left:701.5px;top:106px" width="13" height="12" viewBox="0 0 13 12"><circle cx="3.2" cy="6" r="1.9" stroke="#3aa797" stroke-width="1.1" fill="none"/><rect x="7.8" y="1.2" width="3.8" height="4.4" stroke="#888" stroke-width="0.9" fill="none"/><rect x="7.8" y="6.4" width="3.8" height="4.4" stroke="#888" stroke-width="0.9" fill="none"/></svg>
<span class="t " style="left:716.5px;top:108.5px;font-size:6.7px;color:#333;font-weight:400;">Группировать</span>
<svg style="left:766px;top:109.5px" width="8" height="6" viewBox="0 0 8 6"><path d="M1.5 1.5 L4 4 L6.5 1.5" stroke="#444" stroke-width="1.3" fill="none"/></svg>
<svg style="left:788px;top:88px" width="12" height="13" viewBox="0 0 12 13"><path d="M1 1.5 H11 L7 6.5 V11 L5 12 V6.5 Z" stroke="#3aa797" fill="none"/><path d="M3 3.5 H9" stroke="#3aa797"/></svg>
<span class="t " style="left:803.5px;top:90.5px;font-size:6.7px;color:#333;font-weight:400;">Сортировка и фильтр</span>
<svg style="left:876.5px;top:91.5px" width="8" height="6" viewBox="0 0 8 6"><path d="M1.5 1.5 L4 4 L6.5 1.5" stroke="#444" stroke-width="1.3" fill="none"/></svg>
<svg style="left:897px;top:96px" width="14" height="14" viewBox="0 0 14 14"><path d="M1 1 V13 H13" stroke="#3aa797" fill="none"/><path d="M4 12 V6 M6.5 12 V3 M9 12 V7 M11.5 12 V4" stroke="#3aa797" stroke-width="1.2"/></svg>
<svg style="left:920px;top:96px" width="14" height="14" viewBox="0 0 14 14"><rect x="1" y="1" width="12" height="12" stroke="#3aa797" fill="none"/><circle cx="5" cy="5" r="1.5" stroke="#3aa797" fill="none"/><path d="M1 11 L5 8 L8 10 L13 6" stroke="#3aa797" fill="none"/></svg>
<svg style="left:942px;top:95px" width="16" height="16" viewBox="0 0 16 16"><g transform="rotate(-45 8 8)" stroke="#999" stroke-width="1.1" fill="none"><rect x="0.8" y="5.5" width="8.2" height="5" rx="2.5"/><rect x="7" y="5.5" width="8.2" height="5" rx="2.5"/></g></svg>
<svg style="left:966px;top:96px" width="15" height="14" viewBox="0 0 15 14"><rect x="1.5" y="1.5" width="12" height="11" stroke="#888" fill="none"/><circle cx="1.5" cy="1.5" r="1.2" fill="#888"/><circle cx="13.5" cy="1.5" r="1.2" fill="#888"/><circle cx="1.5" cy="12.5" r="1.2" fill="#888"/><circle cx="13.5" cy="12.5" r="1.2" fill="#888"/><path d="M5 4.5 H10 M7.5 4.5 V10" stroke="#666"/></svg>
<span class="t " style="left:990.5px;top:100.5px;font-size:10px;color:#666;font-weight:700;">···</span>
</body></html>
